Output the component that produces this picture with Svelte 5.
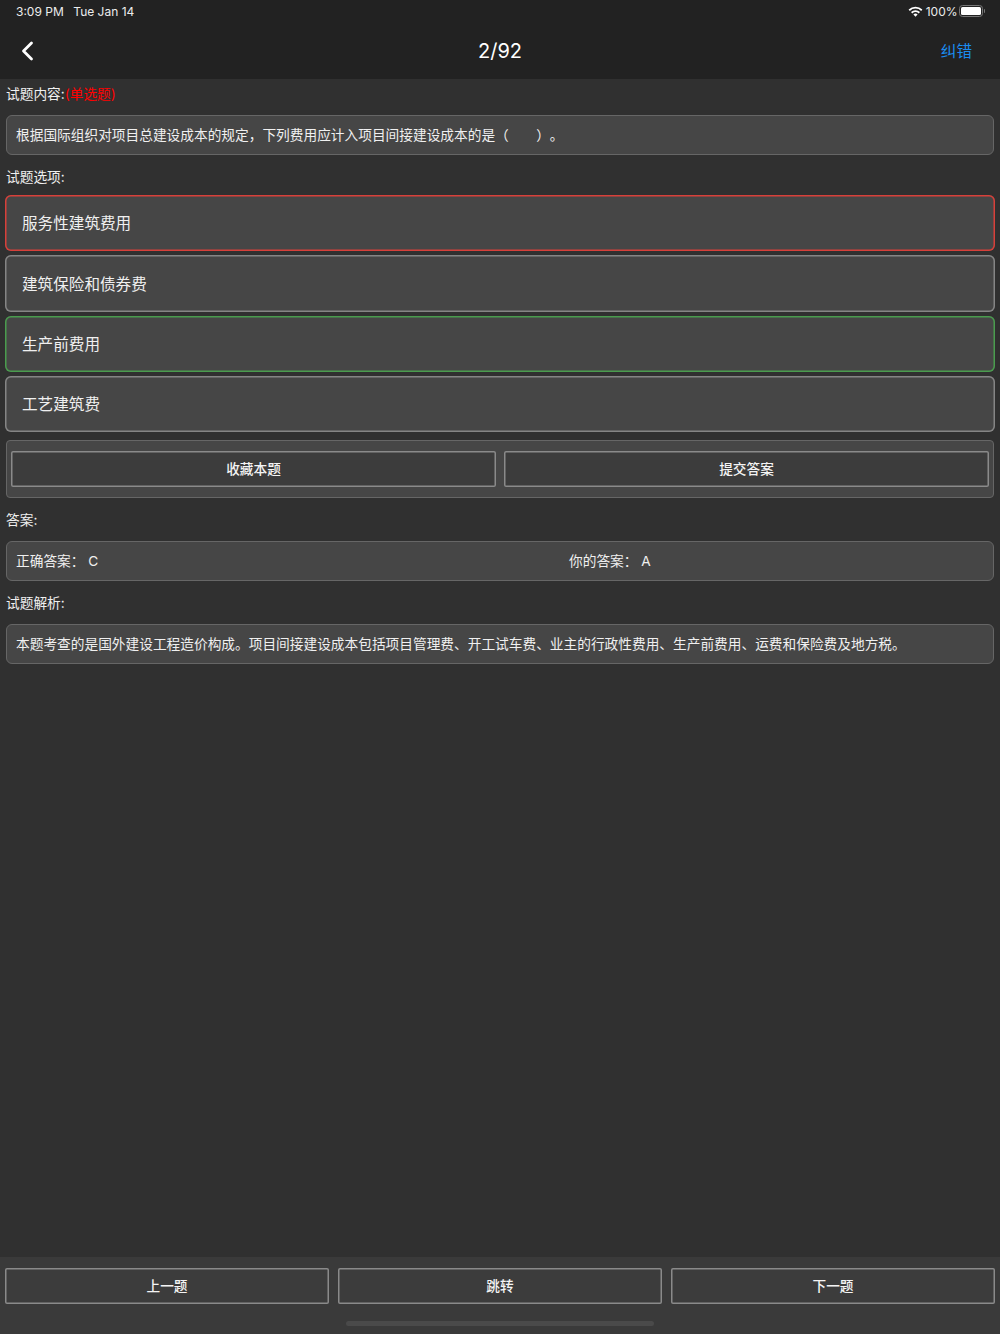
<script>
  const options = [
    { text: "服务性建筑费用", state: "wrong" },
    { text: "建筑保险和债券费", state: "" },
    { text: "生产前费用", state: "right" },
    { text: "工艺建筑费", state: "" },
  ];
</script>

<div class="page">
  <header class="top">
    <div class="status">
      <div class="status-left"><span>3:09 PM</span><span>Tue Jan 14</span></div>
      <div class="status-right">
        <svg class="wifi" width="15" height="11" viewBox="0 0 15 11">
          <path d="M0.6 3.6a10 10 0 0 1 13.8 0l-1.2 1.3a8.2 8.2 0 0 0-11.4 0z" fill="#fff" />
          <path d="M3 6.1a6.6 6.6 0 0 1 9 0l-1.25 1.3a4.8 4.8 0 0 0-6.5 0z" fill="#fff" />
          <path d="M5.4 8.5a3.1 3.1 0 0 1 4.2 0l-2.1 2.2z" fill="#fff" />
        </svg>
        <span>100%</span>
        <div class="battery"><div class="battery-fill"></div></div>
        <div class="battery-tip"></div>
      </div>
    </div>
    <div class="nav">
      <svg class="back" width="14" height="20" viewBox="0 0 14 20">
        <path d="M11.5 2 3.5 10l8 8" fill="none" stroke="#fff" stroke-width="2.8" stroke-linecap="round" stroke-linejoin="round" />
      </svg>
      <div class="title">2/92</div>
      <div class="report">纠错</div>
    </div>
  </header>

  <main class="content">
    <div class="label first">试题内容:<span class="red">(单选题)</span></div>
    <div class="box">根据国际组织对项目总建设成本的规定，下列费用应计入项目间接建设成本的是（&emsp;&emsp;）。</div>

    <div class="label">试题选项:</div>
    <div class="options">
      {#each options as o}
        <div class="option {o.state}">{o.text}</div>
      {/each}
    </div>

    <div class="actions">
      <button class="btn">收藏本题</button>
      <button class="btn">提交答案</button>
    </div>

    <div class="label">答案:</div>
    <div class="box answers">
      <div class="answer-col">正确答案：&nbsp;C</div>
      <div class="answer-col">你的答案：&nbsp;A</div>
    </div>

    <div class="label">试题解析:</div>
    <div class="box">本题考查的是国外建设工程造价构成。项目间接建设成本包括项目管理费、开工试车费、业主的行政性费用、生产前费用、运费和保险费及地方税。</div>
  </main>

  <footer class="bottom">
    <div class="bottom-btns">
      <button class="btn">上一题</button>
      <button class="btn">跳转</button>
      <button class="btn">下一题</button>
    </div>
    <div class="home"></div>
  </footer>
</div>

<style>
  :global(body) {
    background: #303030;
  }

  .page {
    display: flex;
    flex-direction: column;
    height: 1334px;
    background: #303030;
    color: #f0f0f0;
    font-family: "Inter", "Noto Sans CJK SC", sans-serif;
    font-size: 13.7px;
    text-spacing-trim: space-all;
    overflow: hidden;
  }

  .top {
    height: 79px;
    flex-shrink: 0;
    background: #222;
  }

  .status {
    display: flex;
    justify-content: space-between;
    align-items: center;
    height: 22px;
    padding: 0 15px 0 16px;
    font-size: 12px;
    color: #ececec;
  }

  .status-left {
    display: flex;
    gap: 9.5px;
  }

  .status-right {
    display: flex;
    align-items: center;
  }

  .wifi {
    margin-right: 3px;
  }

  .battery {
    width: 23.5px;
    height: 12px;
    margin-left: 1.5px;
    padding: 1px;
    box-sizing: border-box;
    border: 1px solid #777;
    border-radius: 3.5px;
  }

  .battery-fill {
    height: 100%;
    background: #fff;
    border-radius: 1.5px;
  }

  .battery-tip {
    width: 1.5px;
    height: 4px;
    margin-left: 1px;
    background: #777;
    border-radius: 0 1px 1px 0;
  }

  .nav {
    position: relative;
    display: flex;
    justify-content: space-between;
    align-items: center;
    height: 57px;
    padding: 0 28px 0 20px;
  }

  .title {
    position: absolute;
    left: 0;
    right: 0;
    text-align: center;
    font-size: 20px;
    color: #fff;
  }

  .report {
    padding-bottom: 2px;
    font-size: 15.6px;
    color: #1a8cf0;
  }

  .content {
    flex: 1;
    padding: 0 6px;
  }

  .label {
    height: 43px;
    padding-top: 12px;
    box-sizing: border-box;
    line-height: 20px;
  }

  .label.first {
    height: 36px;
    padding-top: 5px;
  }

  .red {
    color: #f00;
  }

  .box {
    display: flex;
    align-items: center;
    height: 40px;
    padding: 0 9px 2px;
    box-sizing: border-box;
    background: #464646;
    border: 1px solid #666;
    border-radius: 6px;
  }

  .answers {
    padding-right: 0;
  }

  .answer-col {
    flex: 1;
  }

  .answer-col:last-child {
    flex: 0 0 424px;
  }

  .options {
    display: flex;
    flex-direction: column;
    gap: 4.1px;
    margin: -3px -1px 7.5px;
  }

  .option {
    display: flex;
    align-items: center;
    height: 56.3px;
    padding: 0 17px 2px;
    box-sizing: border-box;
    background: #464646;
    box-shadow: inset 0 0 0 1.5px #858585;
    border-radius: 6px;
    font-size: 15.6px;
  }

  .option.wrong {
    box-shadow: inset 0 0 0 1.5px #d8403a;
  }

  .option.right {
    box-shadow: inset 0 0 0 1.5px #4a9c4e;
  }

  .actions {
    display: flex;
    gap: 8px;
    height: 58px;
    padding: 10px 4px;
    box-sizing: border-box;
    background: #464646;
    border: 1px solid #666;
    border-radius: 4px;
  }

  .btn {
    flex: 1;
    height: 36px;
    padding: 0 0 2px;
    background: #3c3c3c;
    border: none;
    box-shadow: inset 0 0 0 1.5px #8a8a8a;
    border-radius: 2px;
    color: #f4f4f4;
    font: 500 13.67px "Noto Sans CJK SC", sans-serif;
  }

  .bottom {
    height: 77px;
    flex-shrink: 0;
    background: #3a3a3a;
  }

  .bottom-btns {
    display: flex;
    gap: 9px;
    padding: 11px 5px 0;
  }

  .home {
    width: 308px;
    height: 5px;
    margin: 17px auto 0;
    background: #4a4a4a;
    border-radius: 3px;
  }
</style>
